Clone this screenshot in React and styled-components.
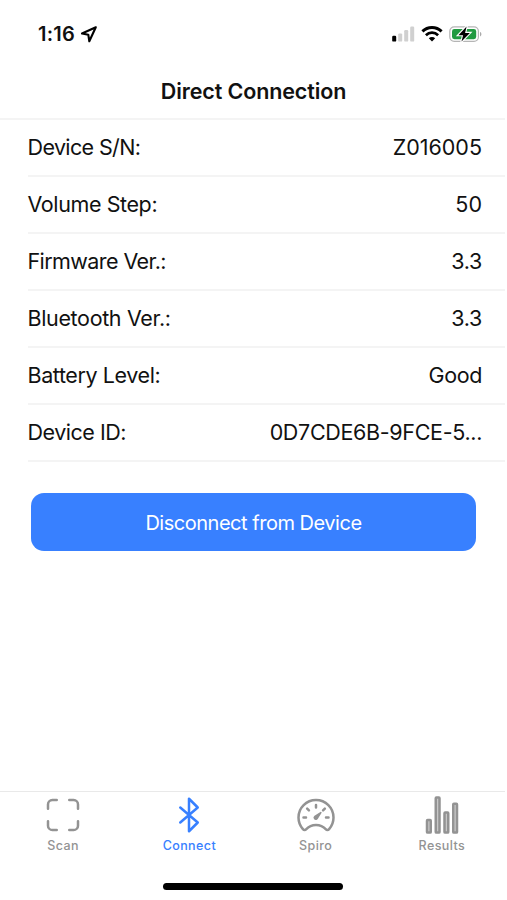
import React from 'react'

import styled, { createGlobalStyle } from 'styled-components'
import {
  IoScanOutline,
  IoBluetoothOutline,
  IoSpeedometerOutline,
  IoStatsChartOutline
} from 'react-icons/io5'

const details = [
  { label: 'Device S/N:', value: 'Z016005', labelSpace: -0.62, valueSpace: 0 },
  { label: 'Volume Step:', value: '50', labelSpace: -0.4, valueSpace: 0 },
  { label: 'Firmware Ver.:', value: '3.3', labelSpace: -0.58, valueSpace: -0.3 },
  { label: 'Bluetooth Ver.:', value: '3.3', labelSpace: -0.35, valueSpace: -0.3 },
  { label: 'Battery Level:', value: 'Good', labelSpace: -0.4, valueSpace: -0.4 },
  { label: 'Device ID:', value: '0D7CDE6B-9FCE-5...', labelSpace: -0.47, valueSpace: -0.33 }
]

const tabs = [
  { name: 'Scan', Icon: IoScanOutline },
  { name: 'Connect', Icon: IoBluetoothOutline },
  { name: 'Spiro', Icon: IoSpeedometerOutline },
  { name: 'Results', Icon: IoStatsChartOutline, barFill: '#c8c8c8' }
]

const LocationIcon = () => (
  <svg width='18' height='18' viewBox='0 0 18 18' fill='none'>
    <path d='M15.8 2.200L2 8.500l6.300 1.200 1 6.600z' stroke='#000' strokeWidth='2.1' strokeLinejoin='round' />
  </svg>
)

const SignalIcon = () => (
  <svg width='23' height='18' viewBox='0 0 23 18'>
    <rect x='0.2' y='10.8' width='4' height='5.8' rx='1.2' fill='#000' />
    <rect x='6.2' y='8.4' width='4' height='8.2' rx='1.2' fill='#d0d0d0' />
    <rect x='12.2' y='5' width='4' height='11.6' rx='1.2' fill='#d0d0d0' />
    <rect x='18.2' y='1.6' width='4' height='15' rx='1.2' fill='#d0d0d0' />
  </svg>
)

const WifiIcon = () => (
  <svg width='22' height='18' viewBox='0 0 22 18' fill='none' stroke='#000'>
    <path d='M1.4 6.4a13.6 13.6 0 0 1 19.2 0' strokeWidth='2.9' />
    <path d='M4.9 10.2a8.7 8.7 0 0 1 12.2 0' strokeWidth='2.7' />
    <path d='M11 16.6l-3.2-3.3a4.6 4.6 0 0 1 6.4 0z' fill='#000' stroke='none' />
  </svg>
)

const BatteryIcon = () => (
  <svg width='34' height='18' viewBox='0 0 34 18'>
    <rect x='0.8' y='1.8' width='28.6' height='14.6' rx='4.4' fill='#fff' stroke='#b5b5b5' strokeWidth='1.2' />
    <rect x='3' y='4' width='24.2' height='10.2' rx='2.4' fill='#219a41' />
    <path d='M31 7v4.4c.9-.4 1.4-1.2 1.4-2.2S31.9 7.4 31 7z' fill='#aaa' />
    <path d='M17.6 1.6L9.4 10.2h4.7l-1.6 6.4 8.4-8.7h-4.8z' fill='#000' stroke='#fff' strokeWidth='2.2' paintOrder='stroke' />
  </svg>
)

const App = () => {
  return (
    <>
      <GlobalStyle />
      <Screen>
        <StatusBar>
          <Clock>
            1:16
            <LocationIcon />
          </Clock>
          <Indicators>
            <SignalIcon />
            <WifiIcon />
            <BatteryIcon />
          </Indicators>
        </StatusBar>
        <Header>
          <Title>Direct Connection</Title>
        </Header>
        <Content>
          <List>
            {details.map((item) => (
              <Row key={item.label}>
                <Label $space={item.labelSpace}>{item.label}</Label>
                <Value $space={item.valueSpace}>{item.value}</Value>
              </Row>
            ))}
          </List>
          <Button>Disconnect from Device</Button>
        </Content>
        <TabBar>
          {tabs.map(({ name, Icon, barFill }) => (
            <Tab key={name} $active={name === 'Connect'} $barFill={barFill}>
              <Icon size={40} />
              <TabName>{name}</TabName>
            </Tab>
          ))}
        </TabBar>
        <HomeIndicator />
      </Screen>
    </>
  )
}

export default App

const GlobalStyle = createGlobalStyle`
  * {
    box-sizing: border-box;
  }
  body {
    margin: 0;
    background-color: #fff;
    font-family: 'Inter', 'Liberation Sans', sans-serif;
  }
`
const Screen = styled.div`
  display: flex;
  flex-direction: column;
  width: 505px;
  height: 900px;
  color: #111;
`
const StatusBar = styled.div`
  display: flex;
  justify-content: space-between;
  align-items: center;
  height: 68px;
  padding: 0 22px 0 38px;
`
const Clock = styled.div`
  display: flex;
  align-items: center;
  gap: 5px;
  font-size: 20px;
  font-weight: 600;
  letter-spacing: 0.2px;
`
const Indicators = styled.div`
  display: flex;
  align-items: center;
  gap: 6px;
`
const Header = styled.header`
  display: flex;
  justify-content: center;
  align-items: center;
  height: 52px;
  padding: 0 0 5px 2px;
  border-bottom: 2px solid #f4f4f4;
`
const Title = styled.h1`
  margin: 0;
  font-size: 21.5px;
  font-weight: 600;
  letter-spacing: -0.12px;
`
const Content = styled.main`
  flex: 1;
`
const List = styled.div`
  margin-left: 28px;
`
const Row = styled.div`
  display: flex;
  justify-content: space-between;
  align-items: center;
  height: 57px;
  padding: 0 23px 1px 0;
  border-bottom: 2px solid #f4f4f4;
  font-size: 21.5px;
  white-space: nowrap;
`
const Label = styled.span`
  margin-left: -0.5px;
  letter-spacing: ${({ $space }) => $space}px;
`
const Value = styled.span`
  letter-spacing: ${({ $space }) => $space}px;
`
const Button = styled.button`
  display: block;
  width: 445px;
  height: 58px;
  margin: 31px 0 0 31px;
  padding: 2px 0 0;
  border: none;
  border-radius: 13px;
  background-color: #3880ff;
  color: #fff;
  font-family: inherit;
  font-size: 20px;
  letter-spacing: -0.48px;
`
const TabBar = styled.nav`
  display: flex;
  height: 92px;
  border-top: 1px solid #e9e9e9;
`
const Tab = styled.div`
  flex: 1;
  display: flex;
  flex-direction: column;
  align-items: center;
  padding-top: 3px;
  color: ${({ $active }) => $active ? '#3880ff' : '#939393'};
  rect {
    fill: ${({ $barFill }) => $barFill || 'none'};
  }
`
const TabName = styled.span`
  margin-top: 3px;
  font-size: 12.5px;
  font-weight: 500;
  line-height: 16px;
  letter-spacing: 0.4px;
`
const HomeIndicator = styled.div`
  width: 180px;
  height: 7px;
  margin: 0 0 10px 163px;
  border-radius: 4px;
  background-color: #000;
`
